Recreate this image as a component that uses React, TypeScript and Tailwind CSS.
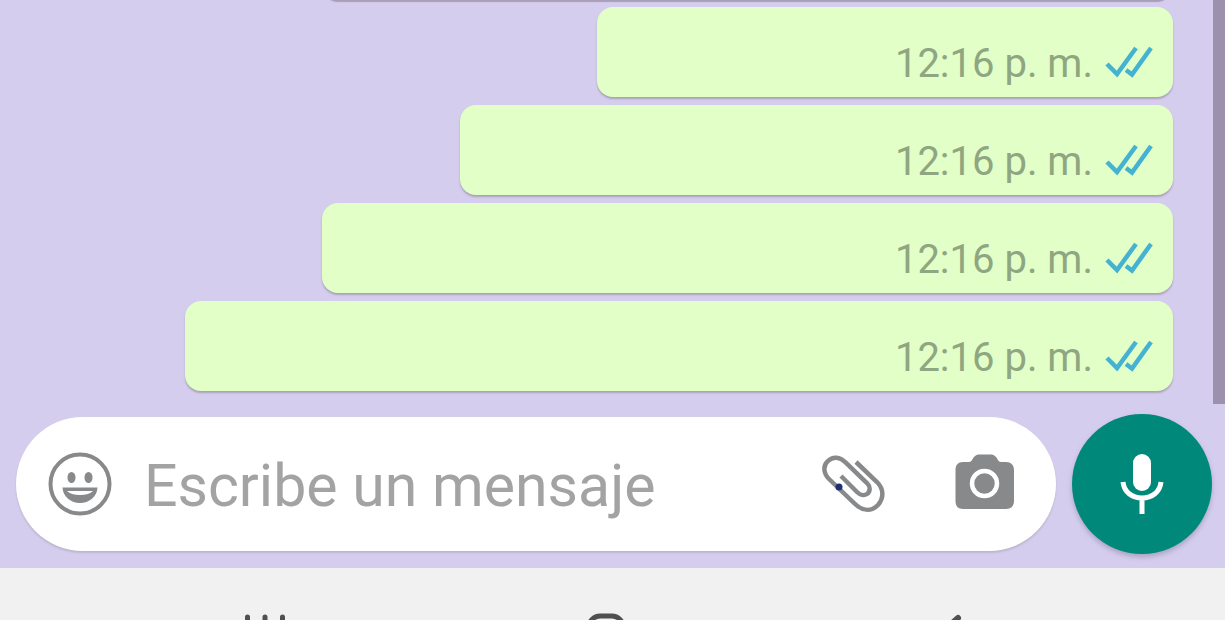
import React from 'react';

const messages = [
  { id: 1, time: '12:16 p. m.', width: 'w-[576px]' },
  { id: 2, time: '12:16 p. m.', width: 'w-[713px]' },
  { id: 3, time: '12:16 p. m.', width: 'w-[851px]' },
  { id: 4, time: '12:16 p. m.', width: 'w-[988px]' },
];

const bubble = 'h-[90px] max-w-full shrink-0 rounded-2xl bg-[#e1ffc7]';

function ReadTicks() {
  return (
    <svg className="h-[34px] w-12" viewBox="0 0 48 34" fill="none" stroke="#45b2d2" strokeWidth="4.5" role="img" aria-label="Leído">
      <path d="M2 19L12 29L31 3" />
      <path d="M21 25L27 29.500L46 3" />
    </svg>
  );
}

function EmojiIcon() {
  return (
    <svg className="size-16" viewBox="0 0 64 64" fill="#87898b">
      <circle cx="32" cy="32" r="29.500" fill="none" stroke="#87898b" strokeWidth="4" />
      <ellipse cx="23.500" cy="25.500" rx="4" ry="5.500" />
      <ellipse cx="40.500" cy="25.500" rx="4" ry="5.500" />
      <path d="M14.500 35.500H49.500C49 45 41 51 32 51S15 45 14.500 35.500Z" />
      <path d="M19 39H45Q41 43 32 43Q23 43 19 39Z" fill="#fff" />
    </svg>
  );
}

function ClipIcon() {
  return (
    <svg className="h-[60px] w-16" viewBox="0 0 64 60" fill="none">
      <path
        d="M35 8L56 28C63 35 63 44 57 51C50 58 41 57 33 49L8 25C2 19 2 11 7 7C12 2 19 3 24 8L46 29C50 33 49 38 46 40C43 42 39 41 36 38L20 22"
        stroke="#87898b"
        strokeWidth="4.500"
      />
      <circle cx="18" cy="33" r="3.500" fill="#1d3272" />
    </svg>
  );
}

function CameraIcon() {
  return (
    <svg className="h-14 w-[60px]" viewBox="0 0 60 56">
      <path
        d="M8 8H14C17 8 17 5 19 3C21 1 22 0.500 25 0.500H35C38 0.500 39 1 41 3C43 5 43 8 46 8H51C56 8 59 11 59 16V47C59 52 56 55 51 55H8C3 55 0.500 52 0.500 47V16C0.500 11 3 8 8 8Z"
        fill="#87898b"
      />
      <circle cx="29.500" cy="29.500" r="12.500" fill="none" stroke="#fff" strokeWidth="4.500" />
    </svg>
  );
}

function MicIcon() {
  return (
    <svg className="h-16 w-11" viewBox="0 0 44 64" fill="none" stroke="#fff" strokeWidth="5">
      <rect x="13" y="2" width="18" height="37" rx="9" fill="#fff" stroke="none" />
      <path d="M3 30C4 40 12 46 22 46S40 40 41 30M22 46V62" />
    </svg>
  );
}

function App() {
  return (
    <div className="flex h-screen flex-col overflow-hidden bg-[#d5cdee] font-[Roboto,sans-serif]">
      {/* Mensajes */}
      <main className="flex min-h-0 flex-1 overflow-hidden">
        <div className="flex min-w-0 flex-1 flex-col items-end justify-end gap-2 pr-10 pb-[13px] pl-4">
          <div className={`${bubble} w-[851px] shadow-[0_3px_1px_#a99eba]`} />
          {messages.map((m) => (
            <div
              key={m.id}
              className={`${bubble} ${m.width} flex items-end justify-end gap-3 pr-5 pb-[13px] shadow-[0_2px_2px_#aaa3b5]`}
            >
              <time className="text-[40px] leading-10 whitespace-nowrap text-[#8fa681]">{m.time}</time>
              <div className="pb-[5px]">
                <ReadTicks />
              </div>
            </div>
          ))}
        </div>
        <div className="w-3 bg-[#9b91ad]" />
      </main>

      {/* Barra para escribir */}
      <form className="flex items-center gap-4 pt-2.5 pr-[13px] pb-3.5 pl-4" onSubmit={(e) => e.preventDefault()}>
        <div className="flex h-[134px] min-w-0 flex-1 items-center rounded-full bg-white pr-[41px] pl-8 shadow-[0_2px_2px_#bdb6ce]">
          <button type="button" aria-label="Emojis" className="shrink-0">
            <EmojiIcon />
          </button>
          <input
            type="text"
            aria-label="Mensaje"
            placeholder="Escribe un mensaje"
            className="ml-8 h-20 min-w-0 flex-1 pt-1 text-[59px] text-[#555] outline-none placeholder:text-[#a3a3a3]"
          />
          <button type="button" aria-label="Adjuntar" className="mr-[70px] shrink-0">
            <ClipIcon />
          </button>
          <button type="button" aria-label="Cámara" className="shrink-0 pb-1">
            <CameraIcon />
          </button>
        </div>
        <button
          type="button"
          aria-label="Grabar audio"
          className="flex size-[140px] shrink-0 items-center justify-center rounded-full bg-[#00897b] shadow-[0_3px_5px_#aaa3c0]"
        >
          <MicIcon />
        </button>
      </form>

      {/* Navegación del sistema */}
      <nav className="flex h-[52px] shrink-0 items-start justify-between overflow-hidden bg-[#f1f1f1] pt-[45px] pr-[21%] pl-[20%]">
        <button type="button" aria-label="Recientes">
          <svg className="size-10" viewBox="0 0 40 40" stroke="#505050" strokeWidth="5" strokeLinecap="round">
            <path d="M2.500 4V38M20 4V38M37.500 4V38" />
          </svg>
        </button>
        <button type="button" aria-label="Inicio">
          <svg className="size-10" viewBox="0 0 40 40" fill="none" stroke="#505050" strokeWidth="5">
            <rect x="3" y="3" width="34" height="34" rx="11" />
          </svg>
        </button>
        <button type="button" aria-label="Atrás">
          <svg className="size-10" viewBox="0 0 40 40" fill="none" stroke="#505050" strokeWidth="6" strokeLinecap="round">
            <path d="M30 5L13 20L30 36" />
          </svg>
        </button>
      </nav>
    </div>
  );
}

export default App;
